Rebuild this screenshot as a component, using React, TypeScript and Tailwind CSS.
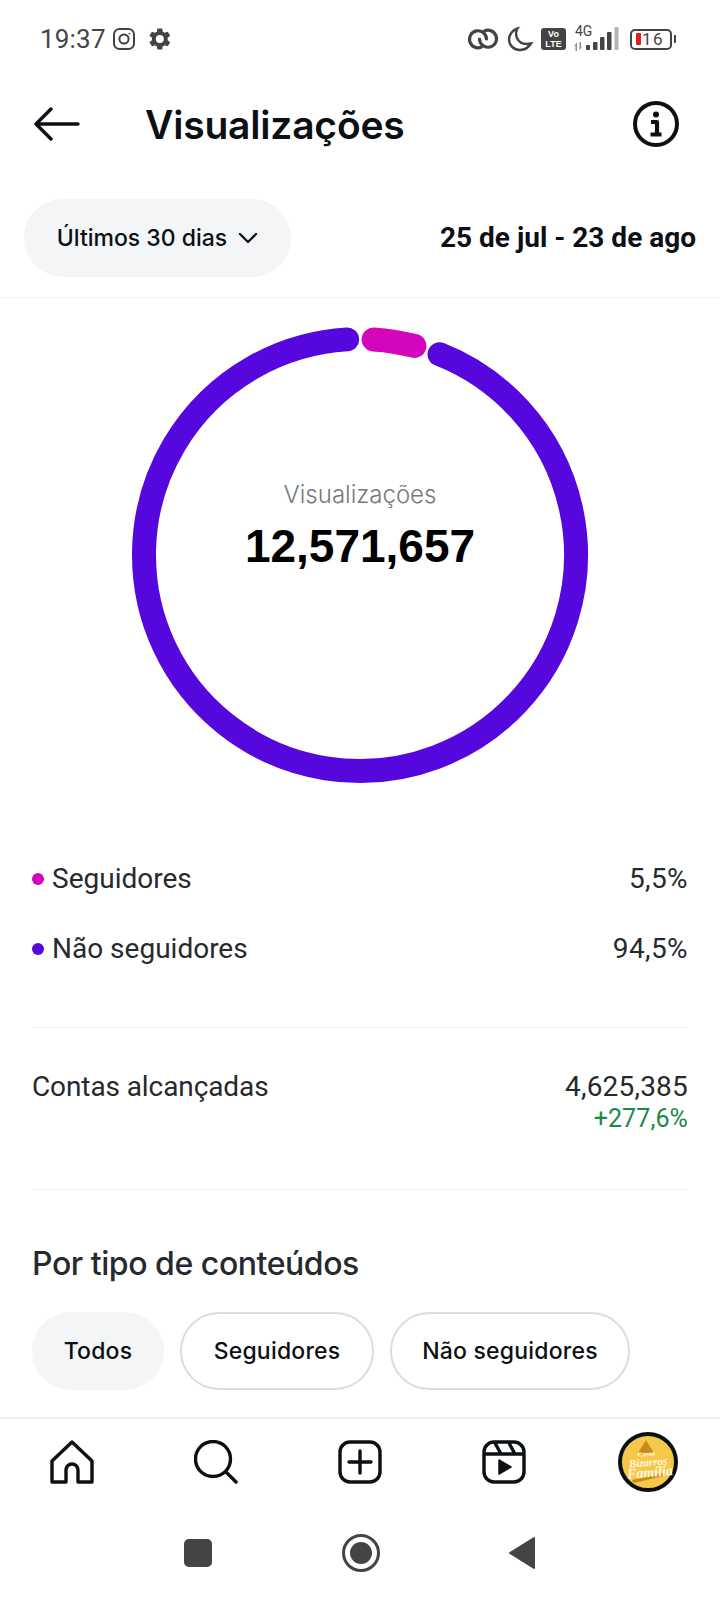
const CX = 240;
const CY = 240;
const R = 216;

function polar(deg: number) {
  const rad = (deg * Math.PI) / 180;
  return { x: CX + R * Math.sin(rad), y: CY - R * Math.cos(rad) };
}

function arc(from: number, to: number) {
  const a = polar(from);
  const b = polar(to);
  const large = to - from > 180 ? 1 : 0;
  return `M${a.x} ${a.y}A${R} ${R} 0 ${large} 1 ${b.x} ${b.y}`;
}

function StatusBar() {
  return (
    <div className="h-[78px] pl-10 pr-[44px] flex items-center justify-between text-[#444444]">
      <div className="flex items-center">
        <span className="text-[26px] leading-none font-['Roboto',sans-serif] tracking-[0.2px]">19:37</span>
        <svg width="24" height="24" viewBox="0 0 24 24" fill="none" stroke="currentColor" strokeWidth="2" className="ml-[6px]">
          <rect x="2" y="2" width="20" height="20" rx="5.5" />
          <circle cx="12" cy="12" r="4.6" />
          <circle cx="17.4" cy="6.6" r="0.9" fill="currentColor" stroke="none" />
        </svg>
        <svg width="28" height="28" viewBox="0 0 24 24" fill="currentColor" className="ml-[9px]">
          <path d="M19.400 13a7.800 7.800 0 0 0 0-2l2.200-1.700-2.100-3.600-2.600 1a7.600 7.600 0 0 0-1.700-1l-.4-2.800h-4.200l-.4 2.800a7.600 7.600 0 0 0-1.700 1l-2.600-1-2.100 3.600L6 11a7.800 7.800 0 0 0 0 2l-2.200 1.700 2.100 3.600 2.600-1a7.600 7.600 0 0 0 1.700 1l.4 2.800h4.200l.4-2.800a7.600 7.600 0 0 0 1.700-1l2.600 1 2.100-3.600zM12.700 15.400a3.400 3.400 0 1 1 0-6.800 3.400 3.400 0 0 1 0 6.800z" />
        </svg>
      </div>
      <div className="flex items-center">
        <svg width="32" height="24" viewBox="0 0 32 24" fill="none" stroke="currentColor" strokeWidth="3.200" strokeLinecap="round">
          <path d="M14.500 20A8.500 8.500 0 1 1 19.500 12" />
          <path d="M17.500 4A8.500 8.500 0 1 1 12.500 12" />
        </svg>
        <svg width="26" height="26" viewBox="0 0 26 26" fill="none" stroke="currentColor" strokeWidth="2.400" className="ml-[8px]">
          <path d="M10.500 2.500C5.500 4 2 8.500 2 13.500 2 19.500 7 24 13 24c4.500 0 8.500-2.500 11-6.500-7 1.500-12-1-14-5.500-1.500-3.500-1-7 .5-9.500z" />
        </svg>
        <div className="ml-[8px] w-[25px] h-[22px] rounded-[3px] bg-[#444444] flex flex-col items-center justify-center text-white font-['Liberation_Sans',sans-serif] font-bold text-[9px] leading-[10px]">
          <span>Vo</span>
          <span>LTE</span>
        </div>
        <div className="ml-[7px] relative w-[48px] h-[24px]">
          <span className="absolute left-[2px] -top-[3px] text-[14px] leading-none font-['Roboto',sans-serif]">4G</span>
          <svg width="48" height="24" viewBox="0 0 48 24" fill="currentColor">
            <path d="M1 19l3-3.500V24H2.500v-5zM6.500 15h1.500v5.500l2-2-3.500 5z" opacity="0.6" />
            <rect x="13" y="18" width="4" height="5" rx="1" />
            <rect x="20" y="15" width="4.500" height="8" rx="1" />
            <rect x="27" y="10" width="4.500" height="13" rx="1" />
            <rect x="34" y="5" width="4.500" height="18" rx="1" />
            <rect x="41.500" y="0" width="4" height="23" rx="1" fill="#b5b5b5" />
          </svg>
        </div>
        <div className="ml-[9px] flex items-center">
          <div className="w-[42px] h-[21px] rounded-[5px] border-2 border-[#444444] flex items-center pl-[4px]">
            <span className="w-[5px] h-[12px] bg-[#e02020] rounded-[1px]" />
            <span className="ml-[1px] text-[17px] leading-none font-['Roboto',sans-serif] tracking-[1.5px]">16</span>
          </div>
          <span className="ml-[2px] w-[2px] h-[8px] bg-[#444444] rounded-r-[1px]" />
        </div>
      </div>
    </div>
  );
}

function Header() {
  return (
    <div className="h-[92px] pl-[34px] pr-[41px] flex items-center justify-between text-[#0c1014]">
      <div className="flex items-center">
        <svg width="46" height="34" viewBox="0 0 46 34" fill="none" stroke="currentColor" strokeWidth="3.400" strokeLinecap="round" strokeLinejoin="round">
          <path d="M44 17H2M17 2L2 17l15 15" />
        </svg>
        <h1 className="ml-[65px] text-[39px] leading-none font-semibold font-['Inter',sans-serif] tracking-[-0.2px]">Visualizações</h1>
      </div>
      <svg width="46" height="46" viewBox="0 0 46 46" fill="none" stroke="currentColor">
        <circle cx="23" cy="23" r="21" strokeWidth="4" />
        <circle cx="23" cy="13.500" r="3" fill="currentColor" stroke="none" />
        <path d="M18 21h6v12M17.500 33.500h11" strokeWidth="4.200" strokeLinejoin="round" />
      </svg>
    </div>
  );
}

function RangeBar() {
  return (
    <div className="mt-[29px] pl-6 pr-[24px] pb-5 border-b border-[#eff1f3] flex items-center justify-between">
      <div className="h-[78px] w-[267px] rounded-full bg-[#f3f5f7] flex items-center justify-center text-[#0c1014]">
        <span className="text-[23px] leading-none font-medium font-['Inter',sans-serif]">Últimos 30 dias</span>
        <svg width="20" height="12" viewBox="0 0 20 12" fill="none" stroke="currentColor" strokeWidth="2.400" strokeLinecap="round" strokeLinejoin="round" className="ml-[11px]">
          <path d="M2 2l8 8 8-8" />
        </svg>
      </div>
      <span className="text-[28px] leading-none font-bold font-['Roboto',sans-serif] text-[#0c1014]">25 de jul - 23 de ago</span>
    </div>
  );
}

function Ring() {
  return (
    <div className="mt-[17px] mx-auto relative w-[480px] h-[480px]">
      <svg width="480" height="480" viewBox="0 0 480 480" fill="none" strokeWidth="24" strokeLinecap="round">
        <path d={arc(21.6, 356.6)} stroke="#5607de" />
        <path d={arc(3.6, 14.6)} stroke="#d305bd" />
      </svg>
      <div className="absolute inset-0 pb-[58px] flex flex-col items-center justify-center">
        <span className="text-[24px] leading-none text-[#737a80] font-['Inter',sans-serif] font-light">Visualizações</span>
        <span className="mt-[16px] text-[46px] leading-none font-bold text-black font-['Liberation_Sans',sans-serif]">12,571,657</span>
      </div>
    </div>
  );
}

function LegendRow({ color, label, value }: { color: string; label: string; value: string }) {
  return (
    <div className="flex items-center justify-between h-[70px]">
      <div className="flex items-center">
        <span className={`w-[12px] h-[12px] rounded-full ${color}`} />
        <span className="ml-2 text-[28px] leading-none">{label}</span>
      </div>
      <span className="text-[28px] leading-none tracking-[0.4px]">{value}</span>
    </div>
  );
}

function Stats() {
  return (
    <div className="px-8 font-['Roboto',sans-serif] text-[#262a2e]">
      <div className="mt-[49px] pb-[43px] border-b border-[#eff1f3]">
        <LegendRow color="bg-[#d305bd]" label="Seguidores" value="5,5%" />
        <LegendRow color="bg-[#5607de]" label="Não seguidores" value="94,5%" />
      </div>
      <div className="pt-[44px] pb-[55px] border-b border-[#eff1f3] flex justify-between">
        <span className="text-[28px] leading-[30px] tracking-[-0.1px]">Contas alcançadas</span>
        <div className="flex flex-col items-end">
          <span className="text-[28px] leading-[30px] tracking-[0.2px]">4,625,385</span>
          <span className="mt-[2px] text-[25px] leading-[30px] text-[#1a8a4a] tracking-[0.1px]">+277,6%</span>
        </div>
      </div>
      <h2 className="mt-[58px] text-[32px] leading-none font-medium font-['Inter',sans-serif] text-[#262a2e] tracking-[-0.45px]">Por tipo de conteúdos</h2>
      <div className="mt-[32px] flex gap-4 font-['Inter',sans-serif] text-[#0c1014] text-[23px] font-medium tracking-[0.2px]">
        <div className="h-[78px] w-[132px] rounded-full bg-[#f3f5f7] flex items-center justify-center">Todos</div>
        <div className="h-[78px] w-[194px] rounded-full border-2 border-[#dcdcdc] flex items-center justify-center">Seguidores</div>
        <div className="h-[78px] w-[240px] rounded-full border-2 border-[#dcdcdc] flex items-center justify-center">Não seguidores</div>
      </div>
    </div>
  );
}

function Avatar() {
  return (
    <svg width="60" height="60" viewBox="0 0 60 60" className="-mt-[8px] -ml-[8px]">
      <circle cx="30" cy="30" r="28" fill="#f5c84c" stroke="#0c1014" strokeWidth="4" />
      <path d="M28 8l8 13H20z" fill="#c98a1c" />
      <path d="M14 48l32-7-1 3-29 7z" fill="#c98a1c" />
      <g transform="rotate(-5 30 30)" fontFamily="'Liberation Serif', serif" fontStyle="italic" fontWeight="700" textAnchor="middle" fill="#fff8e0">
        <text x="29" y="24" fontSize="7" fontStyle="normal" fill="#fff8e0">Casos</text>
        <text x="30" y="34" fontSize="11">Bizarros</text>
        <text x="31" y="45" fontSize="14">Família</text>
      </g>
    </svg>
  );
}

function BottomNav() {
  return (
    <div className="mt-[27px] h-[92px] border-t-2 border-[#eff1f3] pl-[50px] pt-[21px] flex items-start gap-[100px] text-[#0c1014]">
      <svg width="44" height="44" viewBox="0 0 44 44" fill="none" stroke="currentColor" strokeWidth="3.400" strokeLinejoin="round">
        <path d="M2 21L22 2l20 19v21H28V30a6 6 0 0 0-12 0v12H2z" />
      </svg>
      <svg width="44" height="44" viewBox="0 0 44 44" fill="none" stroke="currentColor" strokeWidth="3.400" strokeLinecap="round">
        <circle cx="19" cy="19" r="17.500" />
        <path d="M32 32l10 10" />
      </svg>
      <svg width="44" height="44" viewBox="0 0 44 44" fill="none" stroke="currentColor" strokeWidth="3.400" strokeLinecap="round">
        <rect x="2" y="2" width="40" height="40" rx="10" />
        <path d="M22 11v22M11 22h22" />
      </svg>
      <svg width="44" height="44" viewBox="0 0 44 44" fill="none" stroke="currentColor" strokeWidth="3.400" strokeLinejoin="round">
        <rect x="2" y="2" width="40" height="40" rx="10" />
        <path d="M2 14h40M13 3l6 11M27 3l6 11" />
        <path d="M17 20l12 7-12 7z" fill="currentColor" strokeWidth="1.500" />
      </svg>
      <Avatar />
    </div>
  );
}

function SystemNav() {
  return (
    <div className="pt-[24px] flex items-center justify-center text-[#444444]">
      <div className="w-[28px] h-[28px] rounded-[5px] bg-[#444444]" />
      <svg width="40" height="40" viewBox="0 0 40 40" className="ml-[129px]">
        <circle cx="20" cy="20" r="17.500" fill="none" stroke="currentColor" strokeWidth="3" />
        <circle cx="20" cy="20" r="11" fill="currentColor" />
      </svg>
      <svg width="28" height="34" viewBox="0 0 28 34" fill="currentColor" stroke="currentColor" strokeWidth="2" strokeLinejoin="round" className="ml-[127px]">
        <path d="M26 2v30L2 17z" />
      </svg>
    </div>
  );
}

export default function App() {
  return (
    <div className="w-[720px] h-[1600px] bg-white overflow-hidden">
      <StatusBar />
      <Header />
      <RangeBar />
      <Ring />
      <Stats />
      <BottomNav />
      <SystemNav />
    </div>
  );
}
